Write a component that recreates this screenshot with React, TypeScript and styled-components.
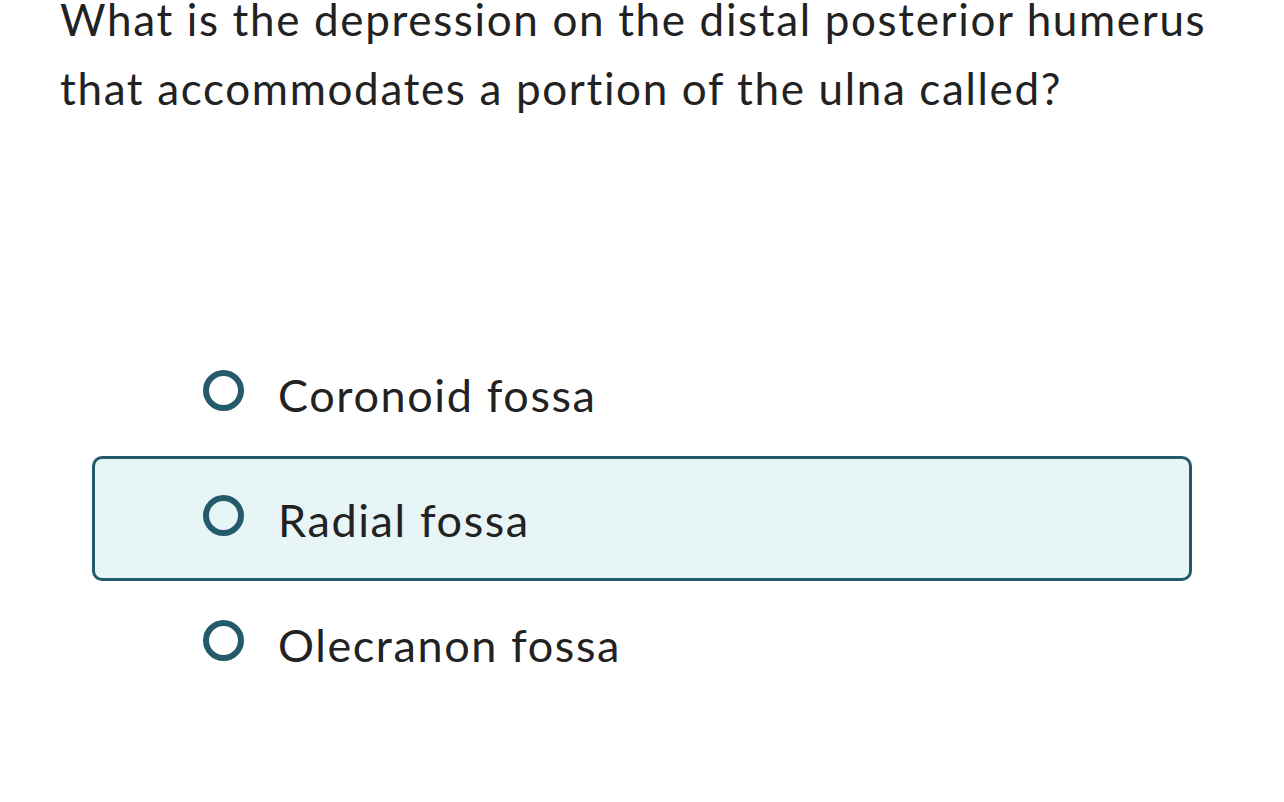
import React, {FC, useState} from 'react';
import styled, {createGlobalStyle} from 'styled-components';

const GlobalStyle = createGlobalStyle`
  html, body {
    margin: 0;
    padding: 0;
    background: #ffffff;
    overflow: hidden;
  }
  body {
    font-family: Lato, "Open Sans", Arial, sans-serif;
    color: #222222;
  }
`;

const Page = styled.div`
  width: 1284px;
  height: 802px;
  padding: 0 0 0 60px;
  box-sizing: border-box;
`;

const Question = styled.h1`
  margin: -15px 0 0 0;
  width: 1200px;
  font-size: 44px;
  font-weight: 400;
  line-height: 69px;
  letter-spacing: 1.65px;
  white-space: nowrap;
  color: #222222;
`;

const Choices = styled.ul`
  list-style: none;
  margin: 208px 0 0 32px;
  padding: 0;
  width: 1100px;
  display: flex;
  flex-direction: column;
`;

interface ChoiceProps {
  $selected: boolean;
}

const Choice = styled.li<ChoiceProps>`
  height: 125px;
  box-sizing: border-box;
  display: flex;
  align-items: center;
  gap: 34px;
  padding: 0 0 6px 108px;
  border: 3px solid ${p => (p.$selected ? '#245a69' : 'transparent')};
  border-radius: 10px;
  background: ${p => (p.$selected ? '#e8f5f7' : 'transparent')};
  cursor: pointer;
`;

const Radio = styled.span`
  width: 41px;
  height: 41px;
  box-sizing: border-box;
  border: 6px solid #245a69;
  border-radius: 50%;
  flex: none;
`;

const Label = styled.span`
  padding-top: 9px;
  font-size: 45px;
  line-height: 1;
  letter-spacing: 1.6px;
  color: #222222;
`;

const options = ['Coronoid fossa', 'Radial fossa', 'Olecranon fossa'];

const App: FC = () => {
  const [selected, setSelected] = useState(1);

  return (
    <Page>
      <GlobalStyle />
      <Question>
        What is the depression on the distal posterior humerus
        <br />
        that accommodates a portion of the ulna called?
      </Question>
      <Choices>
        {options.map((o, i) => (
          <Choice key={o} $selected={selected === i} onClick={() => setSelected(i)}>
            <Radio />
            <Label>{o}</Label>
          </Choice>
        ))}
      </Choices>
    </Page>
  );
};

export default App;
